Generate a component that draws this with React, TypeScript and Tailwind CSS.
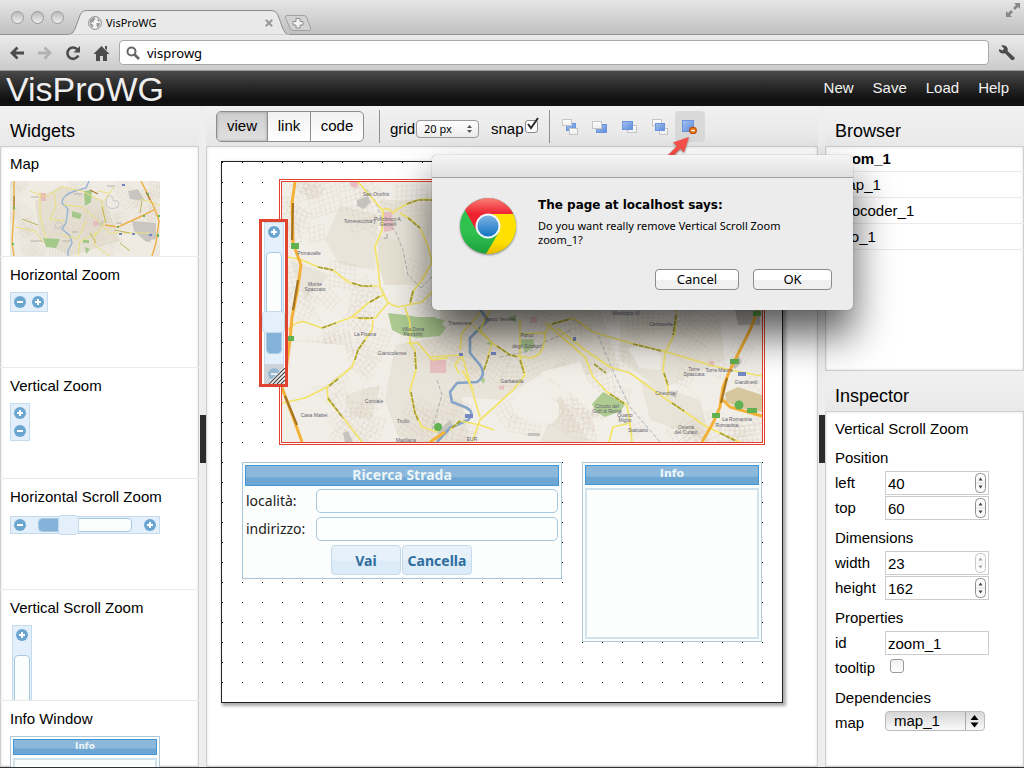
import { useState } from "react";
import type { ReactNode } from "react";

const lucida = "font-['Noto_Sans',sans-serif]";

/* ---------- maps ---------- */

function makeStreets(width: number, height: number, count: number, step: number) {
  let seed = 41;
  const rand = () => {
    seed = (seed * 16807) % 2147483647;
    return seed / 2147483647;
  };
  let d = "";
  for (let i = 0; i < count; i++) {
    const cx = rand() * width;
    const cy = rand() * height;
    const angle = rand() * 3;
    const n = 3 + Math.floor(rand() * 4);
    const len = step * n;
    for (let k = 0; k <= n; k++) {
      const o = (k - n / 2) * step;
      const h = len / 2 + (rand() - 0.5) * step;
      for (const a of [angle, angle + 1.5]) {
        const ux = Math.cos(a);
        const uy = Math.sin(a);
        const sx = cx - uy * o - ux * h;
        const sy = cy + ux * o - uy * h;
        d += `M${sx.toFixed(1)} ${sy.toFixed(1)}l${(ux * h * 2).toFixed(1)} ${(uy * h * 2 + rand() * 3).toFixed(1)}`;
      }
    }
  }
  return d;
}

const bigStreets = makeStreets(480, 260, 150, 5);
const smallStreets = makeStreets(150, 75, 40, 3);

const secondary = [
  "M358 182L372 198 382 210Q388 206 393 213 398 208 405 205T418 200 432 200",
  "M383 210L382 230 375 247 378 267 380 287 388 303 398 307 408 305 422 302 432 292",
  "M288 257L302 260 318 267 333 270 348 282 362 286 378 286",
  "M288 330Q297 320 305 322L322 328 352 317 368 303 385 294",
  "M352 317L365 319 375 318 388 303",
  "M373 320L372 330 358 350 352 367 327 387 328 400 345 420 362 442",
  "M327 387L305 398 282 403",
  "M405 307L410 323 410 343 415 350 416 370 410 390 415 413 422 427 438 432",
  "M407 343L418 343 432 360 448 358",
  "M400 213L412 220 420 228 428 246 432 262 422 280 414 290 410 305",
  "M490 310L480 330 492 343 510 355 530 358Q545 356 545 333L550 325 573 318 593 332 630 343 667 352 710 365 730 370 762 376",
  "M545 323L563 338 585 357 593 377 607 392 627 405 630 423 632 442",
  "M557 328L585 350 610 367 630 373 663 397 707 427 740 442",
  "M677 310L675 333 665 353 663 370 668 387 668 397",
  "M520 320L520 357 525 375 513 390 480 420 472 442",
  "M492 343L484 370",
  "M430 357L462 355 470 383 480 417",
  "M480 313L462 333 460 350",
  "M473 325L492 343",
  "M520 334L545 333M462 355L455 365 459 374M462 370L473 389",
  "M630 423L613 427 609 442M450 430L460 421 480 425 494 430",
];

const olive = [
  "M318 267L333 270M352 283L362 286 372 286M370 302L380 296M358 318L373 318M322 328L336 323",
  "M407 204L418 200 432 200M408 218L420 228M413 291L410 303M365 340L358 350 355 360M338 379L329 386",
  "M328 398L343 418M415 352L416 370M411 392L415 413 418 420M497 346L510 355 518 357",
  "M520 360L524 373M552 324L570 319M594 364L606 373M633 344L662 351M676 315L673 335",
  "M664 373L668 385M672 403L684 411M720 433L736 441M610 394L625 404M452 428L460 421M484 370L489 355",
];

function CityMap() {
  return (
    <svg viewBox="282 182 480 260" preserveAspectRatio="xMinYMin slice" className="block h-full w-full" role="img" aria-label="Map">
      <rect x="282" y="182" width="480" height="260" fill="#f1eee8" />
      <g fill="#e9e4d9">
        <path d="M340 205L378 215 375 270 340 265 325 240ZM380 200L432 200 425 285 385 285ZM395 345L450 335 470 442 400 442 385 400ZM440 310H600L620 370 590 375 545 372 500 400 440 395ZM620 320H720L725 360 660 390 620 360ZM345 395L380 385 372 420 350 415ZM290 260L330 275 305 300ZM560 395L590 442H540ZM640 380L700 400 710 442 650 420Z" />
      </g>
      <path d={bigStreets} transform="translate(282 182)" fill="none" stroke="#cfbfaa" strokeWidth=".6" opacity=".36" />
      <g fill="#f2efe9">
        <path d="M513 400Q530 390 558 402 562 420 550 424 520 420 513 412ZM628 348Q645 342 662 356L660 370 640 368ZM540 372L580 362 590 385 603 395 590 412 570 392ZM292 342L345 345 350 365 325 385 290 390ZM310 300L345 320 325 325ZM592 418L625 420 622 440H598Z" />
        <path d="M378 235L400 240 405 285 385 285 378 265Z" fill="#e6e0d2" />
      </g>
      <g fill="#c6c3bf">
        <path d="M357 200L368 196 371 202 364 209 357 206ZM735 310H760V325H738ZM343 433L348 431 353 442H345ZM670 395L678 390 676 398ZM730 365L738 355 742 362 735 369ZM437 432L450 420 453 425 442 438ZM528 433H540V436H528Z" />
      </g>
      <g fill="#e8bfc1">
        <path d="M383 212H392L394 230 384 232ZM350 182H359L357 188 351 187ZM430 360H446V373H430ZM530 317H537V323H530ZM499 386L504 385 504 390 499 389ZM709 361H714V366H709Z" />
      </g>
      <path d="M725 393L738 387 762 395V412L740 408 726 402Z" fill="#d6c79f" />
      <g fill="#aecb92">
        <path d="M388 313L405 315 418 317 435 317 446 328 440 336 418 338 402 335 392 330ZM592 404L603 392 625 404 621 411 605 417 596 412ZM520 340L533 339 535 346 525 353ZM508 317L516 315 516 323ZM430 317L445 320 436 332ZM492 340L486 344 492 345ZM479 379L485 378 484 384Z" />
      </g>
      <g fill="none" stroke="#a6abb0" strokeWidth=".9" strokeDasharray="4 2">
        <path d="M366 189L376 202 382 222 395 230 403 250 408 275 421 288M573 320L597 333 617 380 630 407 660 442M500 357L535 350 545 342 572 330" />
        <path d="M421 288L432 277M437 380L442 395 432 430" />
      </g>
      <path d="M473 300L488 320 470 338 470 353 480 365Q487 375 477 382L457 383 450 392 452 402 465 407Q476 412 468 420L450 428 437 442" fill="none" stroke="#86a5c8" strokeWidth="2.600" strokeLinejoin="round" />
      <g fill="none" stroke="#f3e368" strokeWidth="1.700" strokeLinejoin="round">
        {secondary.map((d) => (
          <path key={d} d={d} />
        ))}
      </g>
      <g fill="none" stroke="#a59d36" strokeWidth="1.700" strokeDasharray="5 1">
        {olive.map((d) => (
          <path key={d} d={d} />
        ))}
      </g>
      <g fill="none" stroke="#f4b137" strokeWidth="3" strokeLinejoin="round">
        <path d="M295 182L292 203 293 243 301 265 297 293 292 317 290 340 286 370M281 385L293 417 302 442M758 310L750 330 730 370 723 387 720 407 713 423 702 442M720 397L730 407 762 416M430 442L445 432" />
      </g>
      <g fill="none" stroke="#a57423" strokeWidth="2.200">
        <path d="M293 203L292 240M298 280L293 310M285 396L297 425M727 378L721 403" />
      </g>
      <path d="M372 220q5-1 2 4m10 14q4 2 3-4" stroke="#9a9aa6" fill="none" />
      <g fill="#62b152">
        <rect x="291" y="243" width="8" height="6" />
        <rect x="287" y="336" width="7" height="5" />
        <rect x="730" y="359" width="9" height="5" />
        <rect x="753" y="311" width="8" height="5" />
        <rect x="712" y="413" width="8" height="5" />
        <rect x="747" y="408" width="10" height="5" />
        <circle cx="739" cy="405" r="4.500" />
        <circle cx="438" cy="427" r="4" />
      </g>
      <g fill="#7488c4">
        <rect x="738" y="372" width="8" height="4" />
        <rect x="465" y="414" width="8" height="4" />
        <rect x="459" y="353" width="4" height="3" />
        <rect x="491" y="352" width="5" height="3" />
        <rect x="573" y="337" width="3" height="4" />
      </g>
      <g fill="#62626e" fontSize="5" textAnchor="middle" className="font-['Liberation_Sans',sans-serif]">
        <text x="376" y="196">San Onofrio</text>
        <text x="358" y="223">Torrevecchia</text>
        <text x="388" y="221">Policlinico A.</text>
        <text x="388" y="226">Gemelli</text>
        <text x="309" y="255">Primavalle</text>
        <text x="315" y="286">Monte</text>
        <text x="315" y="291">Spaccato</text>
        <text x="365" y="336">La Pisana</text>
        <text x="392" y="355">Gianicolense</text>
        <text x="413" y="331">Villa Doria</text>
        <text x="413" y="336">Pamphilj</text>
        <text x="374" y="403">Corviale</text>
        <text x="314" y="417">Casa Mattei</text>
        <text x="403" y="423">Trullo</text>
        <text x="406" y="442">Magliana</text>
        <text x="460" y="325">Trastevere</text>
        <text x="500" y="321">Parco Venere</text>
        <text x="527" y="337">Parco</text>
        <text x="527" y="348">degli Scipioni</text>
        <text x="512" y="383">Garbatella</text>
        <text x="472" y="441">EUR</text>
        <text x="607" y="408">Circolo del</text>
        <text x="607" y="413">Golf di Roma</text>
        <text x="625" y="417">Quarto</text>
        <text x="625" y="422">Miglio</text>
        <text x="638" y="432">Statuario</text>
        <text x="626" y="315">Municipio VI</text>
        <text x="661" y="326">Centocelle</text>
        <text x="665" y="395">Cinecittà</text>
        <text x="694" y="371">Torre</text>
        <text x="694" y="376">Spaccata</text>
        <text x="719" y="372">Torre Maura</text>
        <text x="746" y="384">Giardinetti</text>
        <text x="737" y="421">La Romanina</text>
        <text x="727" y="427">Romanina</text>
        <text x="686" y="429">Osteria</text>
        <text x="686" y="434">del Curato</text>
      </g>
    </svg>
  );
}

function MapThumb() {
  return (
    <svg viewBox="0 0 150 75" className="block h-[75px] w-[150px]" role="img" aria-label="Map">
      <rect width="150" height="75" fill="#efebe3" />
      <path d="M25 20L50 5 95 20 110 60 60 75 30 60Z" fill="#e5dfd2" />
      <path d={smallStreets} fill="none" stroke="#cfc3b3" strokeWidth=".5" opacity=".35" />
      <path d="M118 10L128 8 135 20 120 18ZM122 40L146 42V58L135 60 124 50ZM86 42L94 40 93 46Z" fill="#c9c6c1" />
      <path d="M30 12H36V20H31ZM83 40H88V45H84Z" fill="#e6bcbc" />
      <path d="M74 10L82 9 81 21 75 25ZM62 30L72 33 70 38 62 36ZM33 57L50 58 46 67 36 66ZM75 66L80 68 76 73ZM73 59H79V62H73Z" fill="#a4c98b" />
      <path d="M79 0L76 7 65 10Q52 14 52 22L58 28 56 42 52 48 60 55 62 62 58 70 58 75" fill="none" stroke="#97b4d6" strokeWidth="1.400" />
      <path d="M97 15Q105 14 103 20 111 18 108 26 100 30 96 24ZM45 44Q49 38 53 44 51 48 45 47Z" fill="none" stroke="#b9bdc6" strokeWidth=".8" />
      <path d="M20 10L35 16 52 6 72 10 92 20 95 40 88 52 70 60 68 75M5 46L25 50 33 62M30 10L30 35 36 58M44 12L46 25 40 38 55 40M54 24L72 26 84 36 100 52 140 52M76 40L68 58 52 54M86 50L84 64 100 75M104 6L94 20M88 10L98 12M130 18L150 24" fill="none" stroke="#eae07c" strokeWidth="1" />
      <path d="M92 26L96 42M104 49L120 52M12 38L28 44M110 62L120 70M80 52L86 62M132 20L130 32" fill="none" stroke="#bdb65e" strokeWidth="1" />
      <path d="M4 0L4 28 2 62 4 75M95 44L108 46 134 34 145 28M131 0L144 26 149 40 146 62 142 75" fill="none" stroke="#edaf45" strokeWidth="1.400" />
      <path d="M4 15L4 26M80 9L88 13M136 11L140 19" stroke="#a77a37" strokeWidth="1.200" fill="none" />
      <path d="M3 26H5V28H3ZM107 45H109V47H107ZM133 34H135V36H133ZM147 53H149V56H147ZM2 62H4V64H2ZM137 12H139V14H137ZM148 34H150V36H148Z" fill="#6bb65a" />
      <path d="M109 52H112V54H109ZM122 52H125V54H122ZM139 53H142V55H139ZM112 3H115V5H112Z" fill="#7186c4" />
      <path d="M21 16H29M20 60H32M62 51H68M97 5H105M52 60H60M106 42H112M136 60H141M64 13H72" stroke="#aaa7a6" strokeWidth=".8" />
    </svg>
  );
}

/* ---------- widgets ---------- */

function ZoomSign({ sign }: { sign: "plus" | "minus" }) {
  return (
    <svg viewBox="0 0 12 12" className="h-3 w-3 shrink-0" aria-hidden="true">
      <circle cx="6" cy="6" r="6" fill="#6ba6d0" />
      <path d={sign === "plus" ? "M3 6H9M6 3V9" : "M3 6H9"} stroke="#fff" strokeWidth="2" />
    </svg>
  );
}

const widgetBox = "border border-[#c5dbec] bg-[#e3f0fb]";

function VerticalSlider() {
  return (
    <div className={`flex h-[162px] w-5 flex-col items-center ${widgetBox} pt-[3px]`}>
      <ZoomSign sign="plus" />
      <div className="mt-[14px] flex h-[102px] w-4 flex-col justify-end rounded-[4px] border border-[#a6c9e2] bg-[#fcfdfd]">
        <div className="h-[22px] rounded-b-[3px] bg-[#85b2d9]" />
      </div>
    </div>
  );
}

const infoTitle = "border border-[#4297d7] bg-linear-to-b from-[#8cb8dc] from-55% to-[#6da6d3] to-65% text-center font-bold text-[#eaf5f7]";

function InfoWindow({ className, titleClass }: { className: string; titleClass: string }) {
  return (
    <div className={`flex flex-col gap-[3px] border border-[#b0c9d8] bg-[#fcfdfd] p-[2px] ${className}`}>
      <div className={`${infoTitle} shrink-0 font-['DejaVu_Sans',sans-serif] ${titleClass}`}>Info</div>
      <div className="flex-1 border-2 border-[#d0e2ec] bg-[#fcfefd]" />
    </div>
  );
}

function PaletteItem({ title, children }: { title: string; children: ReactNode }) {
  return (
    <li className="h-[111px] shrink-0 overflow-hidden border-b border-[#ebebeb] pt-2 pl-[10px]">
      <h3 className="mb-[7px] text-[15px] leading-5">{title}</h3>
      {children}
    </li>
  );
}

function PanelTitle({ children }: { children: ReactNode }) {
  return (
    <h2 className="h-10 shrink-0 bg-linear-to-b from-[#f1f1f1] to-[#e9e9e9] pt-[10px] pl-[10px] text-[18px] leading-[30px]">
      {children}
    </h2>
  );
}

const panelBody = "bg-white shadow-[inset_0_0_0_1px_#cfcfcf,inset_0_0_3px_1px_#ddd]";

function Palette() {
  return (
    <aside className="flex w-[199px] shrink-0 flex-col">
      <PanelTitle>Widgets</PanelTitle>
      <ul className={`flex min-h-0 flex-1 flex-col overflow-hidden ${panelBody}`}>
        <PaletteItem title="Map">
          <MapThumb />
        </PaletteItem>
        <PaletteItem title="Horizontal Zoom">
          <div className={`flex h-5 w-[38px] items-center justify-center gap-[6px] ${widgetBox}`}>
            <ZoomSign sign="minus" />
            <ZoomSign sign="plus" />
          </div>
        </PaletteItem>
        <PaletteItem title="Vertical Zoom">
          <div className={`flex h-[38px] w-5 flex-col items-center justify-center gap-[6px] ${widgetBox}`}>
            <ZoomSign sign="plus" />
            <ZoomSign sign="minus" />
          </div>
        </PaletteItem>
        <PaletteItem title="Horizontal Scroll Zoom">
          <div className="flex h-[22px] w-[150px] items-center">
            <div className={`flex h-[18px] flex-1 items-center justify-between px-[3px] ${widgetBox}`}>
              <ZoomSign sign="minus" />
              <div className="flex h-[14px] w-[94px] items-center rounded-[4px] border border-[#a6c9e2] bg-[#fcfdfd]">
                <div className="h-full w-[19px] rounded-l-[3px] bg-[#85b2d9]" />
                <div className="h-5 w-[21px] shrink-0 rounded-[4px] border border-[#c5dbec] bg-[#e3f0fb]" />
              </div>
              <ZoomSign sign="plus" />
            </div>
          </div>
        </PaletteItem>
        <PaletteItem title="Vertical Scroll Zoom">
          <div className="pl-[2px]">
            <VerticalSlider />
          </div>
        </PaletteItem>
        <PaletteItem title="Info Window">
          <InfoWindow className="h-[100px] w-[150px]" titleClass="h-4 text-[9px] leading-3" />
        </PaletteItem>
      </ul>
    </aside>
  );
}

function Splitter() {
  return (
    <div className="flex w-[7px] shrink-0 items-center bg-[#eee] pt-1" role="separator">
      <div className="ml-px h-12 w-[6px] bg-[#2c2c2c]" />
    </div>
  );
}

/* ---------- editor ---------- */

const pale = "url(#pale)";
const blue = "url(#blue)";

const layerIcons = [
  { label: "Send backward", shapes: [[4, 4, 10, 8, blue], [0, 0, 10, 7, pale], [7, 9, 9, 7, pale]] },
  { label: "Send to back", shapes: [[4, 5, 11, 9, blue], [0, 2, 10, 8, pale]] },
  { label: "Bring to front", shapes: [[5, 6, 10, 8, pale], [0, 2, 11, 9, blue]] },
  { label: "Bring forward", shapes: [[0, 0, 10, 7, pale], [7, 9, 9, 7, pale], [3, 4, 10, 8, blue]] },
] as const;

function LayerIcon({ shapes }: { shapes: readonly (readonly [number, number, number, number, string])[] }) {
  return (
    <svg viewBox="0 0 16 16" className="h-4 w-4" aria-hidden="true">
      <defs>
        <linearGradient id="blue" x2="1" y2="1">
          <stop stopColor="#a6c3f0" />
          <stop offset="1" stopColor="#5c8ada" />
        </linearGradient>
        <linearGradient id="pale" x2="0" y2="1">
          <stop stopColor="#fff" />
          <stop offset="1" stopColor="#eee" />
        </linearGradient>
      </defs>
      {shapes.map(([x, y, w, h, fill], i) => (
        <rect key={i} x={x + 0.5} y={y + 0.5} width={w - 1} height={h - 1} fill={fill} stroke={fill === blue ? "#6b95dc" : "#c6c6c6"} />
      ))}
    </svg>
  );
}

function EditorToolbar() {
  const [mode, setMode] = useState("view");
  const modes = [
    { name: "view", width: "w-[51px]" },
    { name: "link", width: "w-[43px]" },
    { name: "code", width: "w-[52px]" },
  ];
  return (
    <div className="flex h-10 shrink-0 items-center bg-linear-to-b from-[#f1f1f1] to-[#e6e6e6] pt-px pl-[10px] text-[15px]">
      <div className="flex h-[31px] overflow-hidden rounded-[5px] border border-[#8d8d8d] bg-linear-to-b from-[#f2f2f2] to-white">
        {modes.map((m) => (
          <button
            key={m.name}
            type="button"
            onClick={() => setMode(m.name)}
            className={`${m.width} border-r border-[#8d8d8d] pb-[2px] leading-[27px] last:border-r-0 ${
              mode === m.name ? "bg-linear-to-b from-[#cdcdcd] to-[#e0e0e0] shadow-[inset_0_0_3px_#999]" : ""
            }`}
          >
            {m.name}
          </button>
        ))}
      </div>
      <div className="mr-[10px] ml-[15px] h-[33px] w-px bg-[#909090]" />
      <label htmlFor="grid" className="pt-[5px]">
        grid
      </label>
      <div className="relative mt-[5px] ml-px">
        <select
          id="grid"
          defaultValue="20 px"
          className={`block h-[18px] w-[63px] appearance-none rounded-[4px] border border-[#9a9a9a] bg-linear-to-b from-white to-[#ececec] pl-[7px] text-[11px] leading-4 ${lucida}`}
        >
          <option>10 px</option>
          <option>20 px</option>
        </select>
        <svg viewBox="0 0 5 8" className="pointer-events-none absolute top-[5px] right-[7px] h-2 w-[5px]" aria-hidden="true">
          <path d="M0 3L2.500 0 5 3ZM0 5H5L2.500 8Z" fill="#555" />
        </svg>
      </div>
      <label htmlFor="snap" className="ml-3 pt-[5px]">
        snap
      </label>
      <div className="relative ml-px h-[13px] w-[13px]">
        <input id="snap" type="checkbox" defaultChecked className="peer block h-[13px] w-[13px] appearance-none rounded-[3px] border border-[#8a8a8a] bg-white" />
        <svg viewBox="0 0 14 14" className="pointer-events-none absolute -top-[3px] left-0 hidden h-[14px] w-[14px] peer-checked:block" aria-hidden="true">
          <path d="M3 7L6 11 13 1" fill="none" stroke="#2b2b2b" strokeWidth="2" />
        </svg>
      </div>
      <div className="mr-[5px] ml-[11px] h-[33px] w-px bg-[#909090]" />
      {layerIcons.map((icon) => (
        <button key={icon.label} type="button" aria-label={icon.label} className="flex h-[31px] w-[30px] items-center justify-center">
          <LayerIcon shapes={icon.shapes} />
        </button>
      ))}
      <button type="button" aria-label="Remove" className="relative flex h-[31px] w-[30px] items-center justify-center rounded-[4px] bg-[#d9d9d9]">
        <svg viewBox="0 0 15 14" className="h-[14px] w-[15px]" aria-hidden="true">
          <rect x=".5" y=".5" width="11" height="11" fill="url(#blue)" stroke="#6b95dc" />
          <circle cx="11" cy="10.500" r="3.500" fill="#e8720c" stroke="#b24a12" />
          <path d="M9.200 10.500H12.800" stroke="#fff" strokeWidth="1.400" />
        </svg>
        <svg viewBox="0 0 30 26" className="pointer-events-none absolute top-6 -left-[10px] h-[26px] w-[30px] drop-shadow-[0_1px_1px_#888]" aria-hidden="true">
          <path d="M24 2L8 7.500 12 11 0 23 3 26 15.500 13.500 19 17.500Z" fill="#f9504a" />
        </svg>
      </button>
    </div>
  );
}

function GeocoderWidget() {
  const field = "h-6 w-[242px] rounded-[5px] border border-[#a6c9e2] bg-[#fdfefe] px-2 text-[14px]";
  const button = "h-[30px] w-[70px] rounded-[4px] border border-[#c5dbec] bg-linear-to-b from-[#e6f1fa] from-50% to-[#dcebf8] to-55% text-[14px] font-bold text-[#2e6e9e]";
  return (
    <div className={`absolute top-[300px] left-5 h-[117px] w-80 border border-[#a9c6da] bg-[#fcfdfd] p-[2px] text-[14px] text-[#222] ${lucida}`}>
      <div className={`${infoTitle} h-[21px] leading-[18px]`}>Ricerca Strada</div>
      <div className="flex h-7 items-center justify-between px-px pt-px">
        <label htmlFor="localita">località:</label>
        <input id="localita" className={field} />
      </div>
      <div className="flex h-7 items-center justify-between px-px pt-px">
        <label htmlFor="indirizzo">indirizzo:</label>
        <input id="indirizzo" className={field} />
      </div>
      <div className="flex justify-center gap-px pt-[3px] pr-px">
        <button type="button" className={button}>
          Vai
        </button>
        <button type="button" className={button}>
          Cancella
        </button>
      </div>
    </div>
  );
}

function Canvas() {
  return (
    <div className={`min-h-0 flex-1 overflow-hidden pt-[15px] pl-[15px] ${panelBody}`}>
      <div className="relative h-[542px] w-[562px] border border-[#222] bg-white bg-[conic-gradient(from_270deg_at_1px_1px,#000_90deg,transparent_0)] bg-[length:20px_20px] bg-origin-padding shadow-[2px_2px_3px_1px_#aaa]">
        <div className="absolute top-[17px] left-[57px] h-[266px] w-[486px] border-3 border-double border-[#e0432f]">
          <CityMap />
        </div>
        <div className="absolute top-[57px] left-[37px] h-[168px] w-[29px] border-3 border-[#e0432f] bg-white pl-[2px]">
          <VerticalSlider />
          <div className="absolute top-[89px] left-0 h-[22px] w-[23px] rounded-[4px] border border-[#c5dbec] bg-[#e3f0fb]" />
          <div className="absolute top-[142px] left-[2px] flex h-5 w-5 justify-center bg-[#cdd3d8] pt-1">
            <span className="opacity-55">
              <ZoomSign sign="minus" />
            </span>
          </div>
          <svg viewBox="0 0 16 16" className="absolute right-0 bottom-0 h-4 w-4" aria-hidden="true">
            <path d="M0 16L16 0M4 16L16 4M8 16L16 8M12 16L16 12" stroke="#fff" strokeWidth="2.500" />
            <path d="M0 16L16 0M4 16L16 4M8 16L16 8M12 16L16 12" stroke="#444" strokeWidth="1.200" />
          </svg>
        </div>
        <GeocoderWidget />
        <div className="absolute top-[300px] left-[360px]">
          <InfoWindow className="h-[180px] w-[180px]" titleClass="h-5 text-[11px] leading-4" />
        </div>
      </div>
    </div>
  );
}

/* ---------- right side ---------- */

function Spinner({ dim }: { dim?: boolean }) {
  return (
    <span className={`pointer-events-none absolute top-[2px] right-[3px] ${dim ? "opacity-50" : ""}`}>
      <svg viewBox="0 0 11 20" className="h-5 w-[11px]" aria-hidden="true">
        <rect x=".5" y=".5" width="10" height="19" rx="4" fill="#fafafa" stroke="#929292" />
        <path d="M1 10H10" stroke="#ddd" />
        <path d="M3.500 7.500L5.500 4.500 7.500 7.500ZM3.500 12.500H7.500L5.500 15.500Z" fill="#444" />
      </svg>
    </span>
  );
}

const fieldBox = "block h-6 w-[104px] border border-[#ccc] bg-white px-[2px] text-[15px] outline-none";

function NumberRow({ name, value, dim }: { name: string; value: number; dim?: boolean }) {
  return (
    <div className="flex h-[25px]">
      <label htmlFor={name} className="w-[50px] leading-6">
        {name}
      </label>
      <span className="relative h-6">
        <input
          id={name}
          type="number"
          defaultValue={value}
          className={`${fieldBox} [appearance:textfield] [&::-webkit-inner-spin-button]:appearance-none`}
        />
        <Spinner dim={dim} />
      </span>
    </div>
  );
}

function Group({ title, children }: { title: string; children: ReactNode }) {
  return (
    <section className="mt-[5px]">
      <h3 className="h-[25px] leading-6">{title}</h3>
      {children}
    </section>
  );
}

function SidePanels() {
  const items = ["zoom_1", "map_1", "geocoder_1", "info_1"];
  return (
    <aside className="flex w-[199px] shrink-0 flex-col">
      <PanelTitle>Browser</PanelTitle>
      <ul className={`h-[225px] shrink-0 text-[15px] ${panelBody}`}>
        {items.map((item) => (
          <li key={item} className="h-[26px] border-b border-[#ebebeb] pl-[10px] leading-[26px] first:font-bold">
            {item}
          </li>
        ))}
      </ul>
      <PanelTitle>Inspector</PanelTitle>
      <div className={`flex-1 pt-[5px] pl-[10px] text-[15px] ${panelBody}`}>
        <p className="leading-[25px]">Vertical Scroll Zoom</p>
        <Group title="Position">
          <NumberRow name="left" value={40} />
          <NumberRow name="top" value={60} />
        </Group>
        <Group title="Dimensions">
          <NumberRow name="width" value={23} dim />
          <NumberRow name="height" value={162} />
        </Group>
        <Group title="Properties">
          <div className="flex h-[25px]">
            <label htmlFor="id" className="w-[50px] leading-6">
              id
            </label>
            <input id="id" defaultValue="zoom_1" className={fieldBox} />
          </div>
          <div className="flex h-[25px]">
            <label htmlFor="tooltip" className="w-[55px] leading-6">
              tooltip
            </label>
            <input id="tooltip" type="checkbox" className="mt-[3px] h-[14px] w-[14px] appearance-none rounded-[3px] border border-[#999] bg-linear-to-b from-[#f0f0f0] to-white checked:bg-[#888]" />
          </div>
        </Group>
        <Group title="Dependencies">
          <div className="flex h-[25px]">
            <label htmlFor="map" className="w-[50px] leading-6">
              map
            </label>
            <span className="relative h-5">
              <select id="map" className="block h-5 w-[100px] appearance-none rounded-[4px] border border-[#bbb] bg-linear-to-b from-[#d6d6d6] to-[#fafafa] pl-2 text-[15px] leading-[18px]">
                <option>map_1</option>
              </select>
              <svg viewBox="0 0 20 20" className="pointer-events-none absolute top-0 right-0 h-5 w-5" aria-hidden="true">
                <path d="M.5 1V19" stroke="#aaa" />
                <path d="M5.500 9L9.500 4 13.500 9ZM5.500 11.500H13.500L9.500 16.500Z" fill="#000" />
              </svg>
            </span>
          </div>
        </Group>
      </div>
    </aside>
  );
}

/* ---------- browser window ---------- */

function BrowserChrome() {
  return (
    <div className={`shrink-0 ${lucida}`}>
      <div className="flex h-[35px] items-end bg-linear-to-b from-[#e6e6e6] to-[#bfbfbf] shadow-[inset_0_-1px_0_#929292]">
        <div className="flex gap-[7px] self-center pl-[11px]">
          {["Close", "Minimize", "Zoom"].map((name) => (
            <button
              key={name}
              type="button"
              aria-label={name}
              className="h-[13px] w-[13px] rounded-full border border-[#999] bg-linear-to-b from-[#bdbdbd] to-[#ededed]"
            />
          ))}
        </div>
        <div className="relative ml-[5px] flex h-[25px] w-[220px] items-center pr-[16px] pl-[19px]">
          <svg viewBox="0 0 220 25" className="absolute inset-0 h-full w-full" aria-hidden="true">
            <path d="M0 25Q4 24 6 19L11 5Q13 .5 18 .5H203Q207 .5 209 5L214 19Q216 24 220 25Z" fill="#e9e9e9" stroke="#8e8e8e" />
            <path d="M0 25H220" stroke="#e7e7e7" />
          </svg>
          <svg viewBox="0 0 14 14" className="relative h-[14px] w-[14px]" aria-hidden="true">
            <circle cx="7" cy="7" r="6.400" fill="#f4f4f4" stroke="#888" />
            <path d="M2 4Q4 1.500 6.500 1.300L7.500 3 5.500 5 6 6.500 4 6 3 7.500 5.500 9 4.500 12 2 9ZM9 2L12 4.500 11 6 9.500 4.500ZM8.500 7L12 7 11.500 9.500 9.500 12 8.500 9.500Z" fill="#9a9a9a" />
          </svg>
          <span className="relative ml-1 flex-1 text-[11px] leading-4">VisProWG</span>
          <button type="button" aria-label="Close tab" className="relative">
            <svg viewBox="0 0 8 8" className="h-2 w-2" aria-hidden="true">
              <path d="M.8 .8L7.200 7.200M7.200 .8L.8 7.200" stroke="#999" strokeWidth="2" />
            </svg>
          </button>
        </div>
        <button type="button" aria-label="New tab" className="mb-1 -ml-[5px]">
          <svg viewBox="0 0 28 16" className="h-4 w-7" aria-hidden="true">
            <path d="M3 .5H20Q22 .5 23 3L26.500 13Q27 15.500 25 15.500H9Q7 15.500 6 13L1.500 3Q1 .5 3 .5Z" fill="#d2d2d2" stroke="#a0a0a0" />
            <path d="M12 3.500H16V6.500H19V10H16V13H12V10H9V6.500H12Z" fill="#f3f3f3" stroke="#8e8e8e" />
          </svg>
        </button>
        <button type="button" aria-label="Full screen" className="mt-[3px] mr-1 ml-auto self-start">
          <svg viewBox="0 0 14 14" className="h-[14px] w-[14px]" aria-hidden="true">
            <path d="M14 0V6L12 4 9 7 7 5 10 2 8 0ZM0 14V8L2 10 5 7 7 9 4 12 6 14Z" fill="#888" />
          </svg>
        </button>
      </div>
      <div className="flex h-9 items-center border-b border-[#999] bg-linear-to-b from-[#ebebeb] to-[#cbcbcb] pr-[9px] pl-[9px] text-[#4c4c4c]">
        <button type="button" aria-label="Back" className="mr-3">
          <svg viewBox="0 0 16 16" className="h-4 w-4" aria-hidden="true">
            <path d="M15 8H3M8.500 2.500L3 8 8.500 13.500" fill="none" stroke="currentColor" strokeWidth="2.800" />
          </svg>
        </button>
        <button type="button" aria-label="Forward" className="mr-3 text-[#b2b2b2]">
          <svg viewBox="0 0 16 16" className="h-4 w-4" aria-hidden="true">
            <path d="M1 8H13M7.500 2.500L13 8 7.500 13.500" fill="none" stroke="currentColor" strokeWidth="2.800" />
          </svg>
        </button>
        <button type="button" aria-label="Reload" className="mr-3">
          <svg viewBox="0 0 16 16" className="h-4 w-4" aria-hidden="true">
            <path d="M12.500 4.500A5.700 5.700 0 1 0 13.300 10.500" fill="none" stroke="currentColor" strokeWidth="2.600" />
            <path d="M15 1V7.500H8.500Z" fill="currentColor" />
          </svg>
        </button>
        <button type="button" aria-label="Home" className="mr-[9px]">
          <svg viewBox="0 0 17 16" className="h-4 w-[17px]" aria-hidden="true">
            <path d="M8.500 1L16.500 9H14V16H10V11H7V16H3V9H.5ZM12 1H14V5L12 3.500Z" fill="currentColor" />
          </svg>
        </button>
        <div className="flex h-[25px] flex-1 items-center rounded-[4px] border border-[#a9a9a9] bg-white pl-[6px]">
          <svg viewBox="0 0 14 14" className="h-[14px] w-[14px]" aria-hidden="true">
            <circle cx="5.500" cy="5.500" r="4" fill="none" stroke="#666" strokeWidth="2" />
            <path d="M8.500 8.500L13 13" stroke="#666" strokeWidth="2.600" />
          </svg>
          <input aria-label="Address" defaultValue="visprowg" className="ml-[7px] flex-1 bg-transparent text-[13px] leading-5 text-black outline-none" />
        </div>
        <button type="button" aria-label="Settings" className="ml-[9px]">
          <svg viewBox="0 0 17 17" className="h-[17px] w-[17px]" aria-hidden="true">
            <path d="M3 1.500L6 4.500 4.500 6.500 1 5Q.5 9 4.500 9.500 6 9.700 7 9.200L13 15.500Q14.500 16.800 16 15.500T16 13L9.500 7Q10.500 4.500 8.500 2.500 6 .5 3 1.500Z" fill="currentColor" />
          </svg>
        </button>
      </div>
    </div>
  );
}

function ChromeLogo() {
  return (
    <svg viewBox="0 0 56 56" className="h-14 w-14 shrink-0 drop-shadow-[0_1px_1px_#888]" aria-hidden="true">
      <defs>
        <linearGradient id="red" x2="0" y2="1">
          <stop stopColor="#f98078" />
          <stop offset=".5" stopColor="#ee2130" />
        </linearGradient>
        <linearGradient id="core" x2="0" y2="1">
          <stop stopColor="#7db4e4" />
          <stop offset="1" stopColor="#1272c0" />
        </linearGradient>
        <linearGradient id="yellow" x2="0" y2="1">
          <stop offset=".7" stopColor="#ffe000" />
          <stop offset="1" stopColor="#e9b800" />
        </linearGradient>
        <linearGradient id="green" x2="0" y2="1">
          <stop offset=".6" stopColor="#2fc24e" />
          <stop offset="1" stopColor="#1ea03e" />
        </linearGradient>
      </defs>
      <circle cx="28" cy="28" r="28" fill="url(#green)" />
      <path d="M28 16H53.300A28 28 0 0 1 26 56L39 34Z" fill="url(#yellow)" />
      <path d="M5 12A28 28 0 0 1 53.300 16H28L16 32Z" fill="url(#red)" />
      <circle cx="28" cy="28" r="12.500" fill="#f4f8fa" />
      <circle cx="28" cy="28" r="10.500" fill="url(#core)" />
    </svg>
  );
}

function ConfirmDialog({ onClose }: { onClose: () => void }) {
  const button = "h-[21px] rounded-[4px] border border-[#8b8b8b] bg-linear-to-b from-white from-50% to-[#f0f0f0] to-55% text-[13px] leading-[19px]";
  return (
    <div
      role="dialog"
      aria-labelledby="dialog-title"
      className={`absolute top-[155px] left-[432px] z-10 w-[421px] rounded-[5px] bg-[#ececec] shadow-[0_25px_40px_rgba(0,0,0,0.65),0_0_1px_rgba(0,0,0,0.6)] ${lucida}`}
    >
      <div className="h-[23px] rounded-t-[5px] border-b border-[#a0a0a0] bg-linear-to-b from-[#f5f5f5] to-[#e0e0e0]" />
      <div className="flex gap-[22px] pt-5 pl-7">
        <ChromeLogo />
        <div className="w-[270px] text-[11px] leading-[14px]">
          <h2 id="dialog-title" className="mb-2 pt-px font-['DejaVu_Sans',sans-serif] text-[12px] leading-3 font-bold">
            The page at localhost says:
          </h2>
          <p>Do you want really remove Vertical Scroll Zoom zoom_1?</p>
        </div>
      </div>
      <div className="flex justify-end gap-[14px] pt-[15px] pr-[21px] pb-5">
        <button type="button" onClick={onClose} className={`${button} w-[84px]`}>
          Cancel
        </button>
        <button type="button" onClick={onClose} className={`${button} w-[79px]`}>
          OK
        </button>
      </div>
    </div>
  );
}

export default function App() {
  const [asking, setAsking] = useState(true);
  return (
    <div className="relative flex h-screen flex-col overflow-hidden border-b border-[#333] bg-[#eee] font-['Liberation_Sans',sans-serif] text-black">
      <BrowserChrome />
      <header className="flex h-[35px] shrink-0 items-center justify-between bg-linear-to-b from-[#4a4a4a] to-[#111] to-80% pr-[15px] pl-[6px] text-[#eee]">
        <h1 className="pt-px text-[34px] leading-8">VisProWG</h1>
        <nav className="flex gap-[19px] text-[15px] text-[#f2f2f2]">
          {["New", "Save", "Load", "Help"].map((item) => (
            <a key={item} href={`#${item.toLowerCase()}`}>
              {item}
            </a>
          ))}
        </nav>
      </header>
      <div className="flex min-h-0 flex-1">
        <Palette />
        <Splitter />
        <main className="flex min-w-0 flex-1 flex-col">
          <EditorToolbar />
          <Canvas />
        </main>
        <Splitter />
        <SidePanels />
      </div>
      {asking && <ConfirmDialog onClose={() => setAsking(false)} />}
    </div>
  );
}
